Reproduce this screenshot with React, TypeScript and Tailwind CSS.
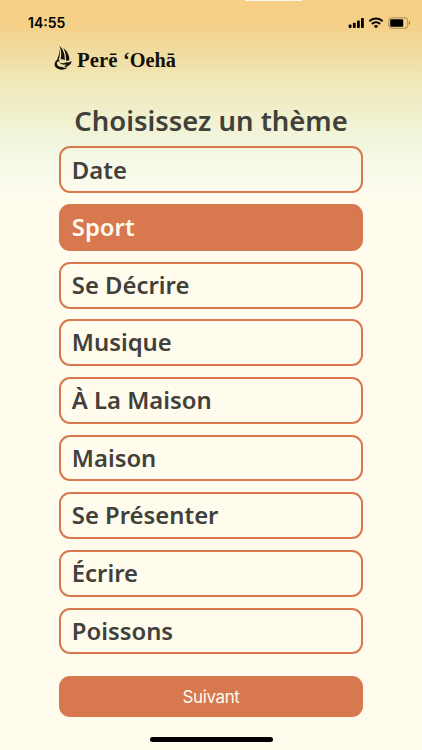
import React, { useState } from 'react';

const themes: string[] = [
    'Date',
    'Sport',
    'Se Décrire',
    'Musique',
    'À La Maison',
    'Maison',
    'Se Présenter',
    'Écrire',
    'Poissons',
];

const StatusBar: React.FC = () => (
    <div className="flex h-[45px] items-center justify-between pl-[28px] pr-[11px] text-black">
        <span className="font-['Inter',sans-serif] text-[14px] leading-none font-semibold">14:55</span>
        <div className="flex items-center">
            <svg width="17" height="12" viewBox="0 0 17 12" fill="currentColor">
                <rect x="0.7" y="7.5" width="2.8" height="3.5" rx="0.8" />
                <rect x="4.9" y="5.7" width="2.8" height="5.3" rx="0.8" />
                <rect x="9" y="3.4" width="2.8" height="7.6" rx="0.8" />
                <rect x="13" y="1" width="2.8" height="10" rx="0.8" />
            </svg>
            <svg className="ml-[3px]" width="16" height="12" viewBox="0 0 16 12" fill="none" stroke="currentColor" strokeWidth="2">
                <path d="M1.4 4.2a9.4 9.4 0 0 1 13.2 0" />
                <path d="M3.9 7a5.8 5.8 0 0 1 8.2 0" />
                <path d="M8 11.2 5.800 9a3.100 3.100 0 0 1 4.400 0z" fill="currentColor" stroke="none" />
            </svg>
            <svg className="ml-[4px]" width="23" height="12" viewBox="0 0 23 12">
                <rect x="0.8" y="0.8" width="19" height="10.4" rx="3" fill="none" stroke="#a38b55" />
                <rect x="2.2" y="2.3" width="13" height="7.4" rx="1.3" fill="black" />
                <path d="M21 4.3v3.4c.8-.3 1.2-.9 1.2-1.7S21.800 4.600 21 4.300z" fill="#8c7747" />
            </svg>
        </div>
    </div>
);

const Logo: React.FC = () => (
    <div className="flex h-[26px] items-center pl-[54px] text-[#15100a]">
        <svg width="20" height="26" viewBox="0 0 20 26" fill="currentColor">
            <path d="M5.2 0.6C9 4.2 11 8.8 10.8 15.2C9.5 14.2 7.9 14.1 6.7 14.5C7.7 9.8 7.3 5 5.2 0.6z" />
            <path d="M9.2 2.7C13.6 6.4 15.6 10.5 15.3 15.5L12 15.7C12.2 10.7 11.4 6.5 9.2 2.7z" />
            <path d="M5.1 3.9C6.2 7.8 6 11 4.8 14.3L2.9 14.6C5 11 5.5 7.7 5.1 3.9z" />
            <path d="M4.5 14.1C.4 15.6-.6 20.4 2.2 22.8C5.800 25.600 11.500 25 13.700 22.300C11.700 22.900 9.800 22.800 8.200 22C5.300 22.100 3.200 20.700 2.900 18.700C2.700 17.100 3.700 16.100 5.900 16.300z" />
            <path d="M5.300 17.300C8 18.900 10.500 18.500 12.200 17.300C14.200 17.700 16 17.200 17.600 16.100C17.300 19.200 15.200 21.300 11.800 22L10.400 21.300L12.500 19.300C9.800 20.100 6.900 19.600 5.300 17.300z" />
        </svg>
        <svg
            className="ml-[3px] overflow-visible font-['Liberation_Serif',serif] text-[20px] font-bold"
            width="100"
            height="26"
            viewBox="0 0 100 26"
            fill="currentColor"
        >
            <text x="0" y="21.5" textLength="40.5" lengthAdjust="spacingAndGlyphs">Perē</text>
            <text x="46" y="21.5" textLength="53" lengthAdjust="spacingAndGlyphs">‘Oehā</text>
        </svg>
    </div>
);

interface ThemeButtonProps {
    label: string;
    selected: boolean;
    onSelect: () => void;
}

const ThemeButton: React.FC<ThemeButtonProps> = ({ label, selected, onSelect }) => (
    <button
        onClick={onSelect}
        className={`flex h-[46.9px] w-full items-center rounded-[11px] border-2 border-[#d7784e] pt-[1.4px] pl-[10.8px] text-left text-[23.85px] leading-none font-semibold ${
            selected ? 'bg-[#d7784e] text-[#fffbee]' : 'text-[#42403a]'
        }`}
    >
        {label}
    </button>
);

export default function App() {
    const [selected, setSelected] = useState('Sport');

    return (
        <div className="relative h-[750px] w-[422px] overflow-hidden bg-[#fffcee] bg-[linear-gradient(to_bottom,#f6cf85_0px,#f5d088_25px,#f1dca0_52px,#f0e7b8_80px,#f0efca_110px,#f1f4d7_133px,#f3f7e2_150px,#f8faea_172px,#fffcee_198px)] font-['Noto_Sans',sans-serif]">
            <div className="absolute top-0 left-[245px] h-px w-[57px] bg-[#fffaf0]" />
            <StatusBar />
            <Logo />
            <main className="px-[59px] pt-[31.3px]">
                <h1 className="h-[44px] text-center text-[27.45px] leading-[38px] font-semibold whitespace-nowrap text-[#42403a]">
                    Choisissez un thème
                </h1>
                <div className="flex flex-col gap-[10.77px]">
                    {themes.map((theme) => (
                        <ThemeButton
                            key={theme}
                            label={theme}
                            selected={theme === selected}
                            onSelect={() => setSelected(theme)}
                        />
                    ))}
                </div>
                <button className="mt-[22px] h-[41px] w-full rounded-[11px] bg-[#d7784e] pt-[2px] font-['Inter',sans-serif] text-[17px] tracking-[-0.4px] text-[#fffbee]">
                    Suivant
                </button>
            </main>
            {/* Indicateur d'accueil */}
            <div className="mx-auto mt-[20px] h-[5px] w-[123px] rounded-full bg-black" />
        </div>
    );
}
